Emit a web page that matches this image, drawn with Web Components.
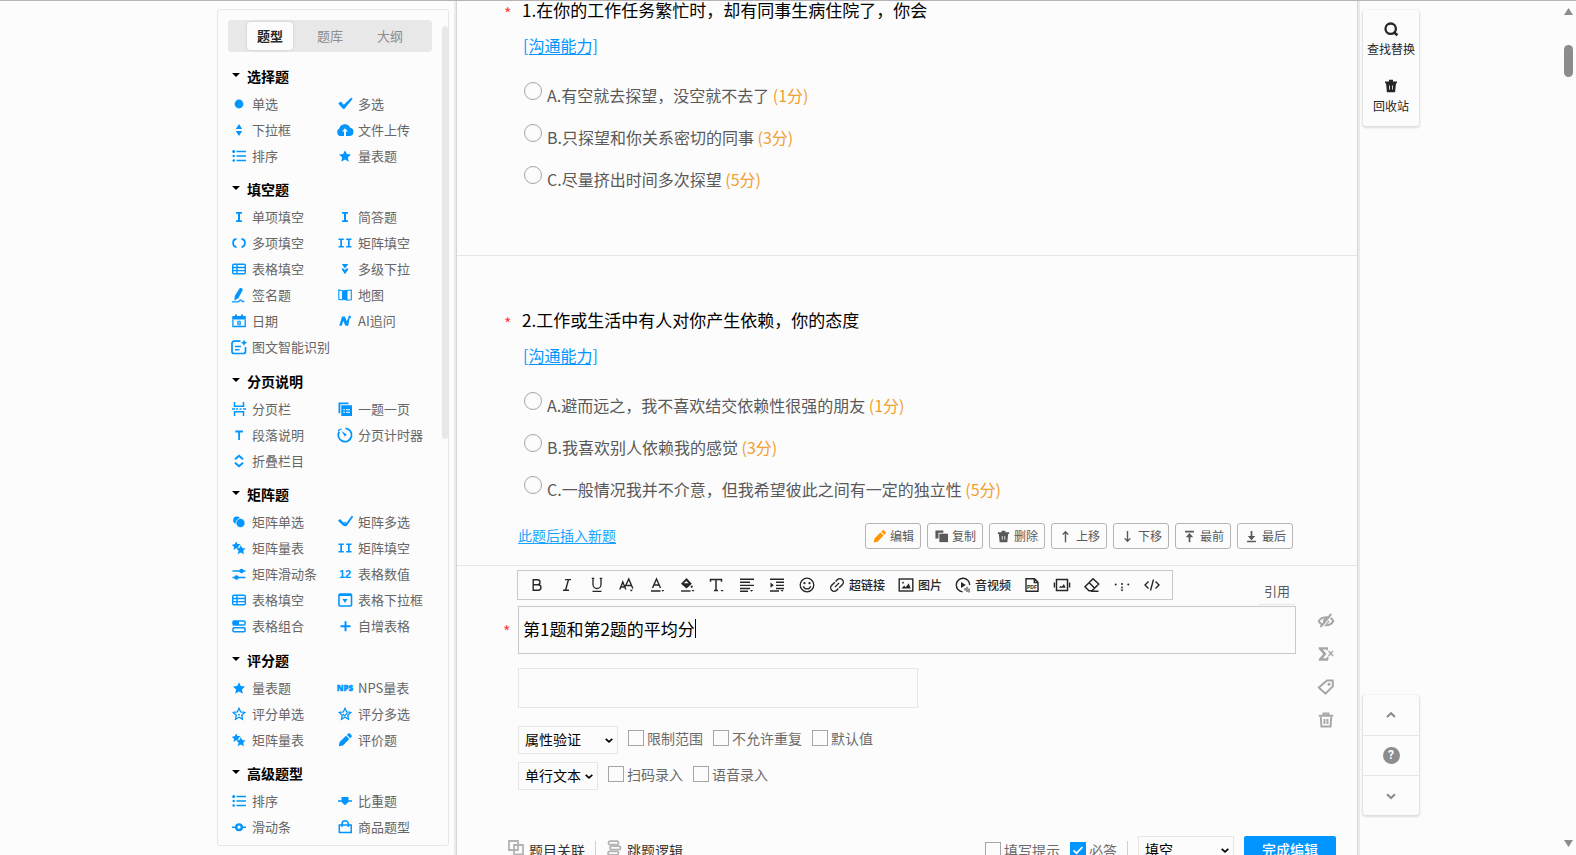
<!DOCTYPE html>
<html lang="zh-CN">
<head>
<meta charset="utf-8">
<title>问卷编辑</title>
<style>
  html, body { height: 100%; }
  body { margin: 0; background: #fcfcfc; color: #595959; font: 14px/20px "Noto Sans CJK SC", "Noto Sans", sans-serif; overflow: hidden; }
</style>
</head>
<body>
<survey-designer></survey-designer>
<script>
const ICONS = {
  dot: '<circle cx="8" cy="8" r="4.4"/>',
  check: '<path d="M1.200 7.600 3.800 5.500l3 3.300L14.200 1.700l1.500 1L7.300 12.900 5.800 12.700z"/>',
  updown: '<path d="M8 2l3.2 5H4.8zM8 14l3.2-5H4.8z"/>',
  cloud: '<path fill-rule="evenodd" d="M4.2 14A3.900 3.900 0 0 1 2.200 6.700 5.800 5.800 0 0 1 13.200 5.700a4.200 4.200 0 0 1-.8 8.300H9V9.500h2L8 6.200 5 9.500h2v4.500z"/>',
  list: '<circle cx="2.700" cy="3.500" r="1.500"/><circle cx="2.700" cy="8" r="1.200"/><circle cx="2.700" cy="12.500" r="1.300"/><path d="M5.500 3.500H15M5.500 8H15M5.500 12.500H15" stroke="currentColor" stroke-width="1.300"/>',
  star: '<path d="M8 2.200l1.800 3.900 4.200.5-3.100 2.900.8 4.200L8 11.600l-3.700 2.100.8-4.200L2 6.600l4.200-.5z"/>',
  ibeam: '<path d="M5 3h6v1.700H9v6.600h2V13H5v-1.700h2V4.700H5z"/>',
  brackets: '<path d="M5.500 4C1 4.300 1 11.700 5.500 12M10.500 4c4.500.3 4.500 7.700 0 8" fill="none" stroke="currentColor" stroke-width="1.800"/>',
  ibeam2: '<path d="M1.500 3.500h5.300v1.500H5v6h1.800v1.500H1.500V11h1.800V5H1.500zM9.200 3.500h5.300v1.500h-1.800v6h1.800v1.500H9.200V11H11V5H9.200z"/>',
  grid: '<path d="M3 3.200h10a1.300 1.300 0 0 1 1.300 1.300v7a1.300 1.300 0 0 1-1.300 1.300H3a1.300 1.300 0 0 1-1.300-1.300v-7A1.300 1.300 0 0 1 3 3.200zM2 6.500h12M2 9.600h12M6 3.500v9" fill="none" stroke="currentColor" stroke-width="1.400"/>',
  drop2: '<path d="M4.800 3h6.400L8 7.400zM4.800 7.500h1.900L8 9.200l1.300-1.700h1.900v1L8 13.200 4.800 8.500z"/>',
  sign: '<path d="M8.500 1.500c1.500-1 3.400 0 3.200 1.600L7.500 11 3.500 13.700 3.700 9z"/><path d="M1 14.800h5.500c1.500 0 2-2 3.200-2 1 0 .6 1.700 1.900 1.700h1.700" fill="none" stroke="currentColor" stroke-width="1.300"/>',
  map: '<path d="M5 3.500L10.500 2.800v10.700L5 12.800z"/><path d="M5.500 3.800L1.800 3v9.200l3.700.8M10 3.500l4.300-.5v9.700l-4.300.5" fill="none" stroke="currentColor" stroke-width="1.100"/>',
  date: '<path d="M2 3h2V1.500h2V3h4V1.500h2V3h2a.8.800 0 0 1 .8.800V6.500H1.200V3.800A.8.800 0 0 1 2 3z"/><path d="M1.900 6.500v7h12.300v-7" fill="none" stroke="currentColor" stroke-width="1.300"/><path d="M6.800 8.200h2.500v3.600H6.800zM6.800 10h2.500" fill="none" stroke="currentColor"/>',
  ai: '<path d="M5 3.500h2.800l2 4.800L11 5.200 13 3l-1.800 9.700H8.500L6.200 8 4.700 12.700H2.300z"/><circle cx="12.700" cy="4" r="1.300"/>',
  smart: '<path d="M9.500 2.200H3A2 2 0 0 0 1 4.200v8.300a2 2 0 0 0 2 2h9.500a2 2 0 0 0 2-2V8" fill="none" stroke="currentColor" stroke-width="1.700"/><path d="M4 7.500h6M4 10.800h4.500" stroke="currentColor" stroke-width="1.500"/><path d="M13 .5l1 2.200 2.200 1-2.200 1-1 2.200-1-2.200-2.200-1 2.200-1z"/>',
  pagebreak: '<path d="M3.500 1v4.200h9V1M3.500 15v-4.200h9V15" fill="none" stroke="currentColor" stroke-width="1.500"/><path d="M1 8h3M5 8h2M8.500 8h2M12 8h3" stroke="currentColor" stroke-width="1.500"/>',
  pages: '<path d="M1.500 1.500h10v1.800H3.300v9H1.500z"/><path fill-rule="evenodd" d="M4.300 4.300h10.700v10.700H4.300zm1.900 4v1h1.800v-1zm2.800 0v1h4v-1zm-2.800 2.500v1h1.800v-1zm2.800 0v1h4v-1z"/>',
  tee: '<path d="M4.300 3.500h7.600v2H9v7.500H7.200V5.500H4.300z"/>',
  timer: '<path d="M8.500 1.300A6.700 6.700 0 1 1 2.200 4.500" fill="none" stroke="currentColor" stroke-width="1.800"/><path d="M4.500 4l5.300 3.500-2 2z"/><path d="M1 3.800l3.500-2" stroke="currentColor" stroke-width="1.200"/>',
  fold: '<path d="M4 6.300L8 2.800l4 3.500M4 9.700l4 3.500 4-3.500" fill="none" stroke="currentColor" stroke-width="2"/>',
  dots2: '<circle cx="5.800" cy="6.200" r="3.600"/><circle cx="9.500" cy="9" r="4.500" stroke="#fcfcfc" stroke-width=".8"/>',
  check2: '<path d="M1 6.800l2-1.800 3.700 3.500L8 7.500l1.300 1.500L14.800 1.700l1.400 1L9.500 12.300 7 12l-1-.5z"/><path d="M3.500 4.500l5 5.500" stroke="#fcfcfc" stroke-width=".5"/>',
  stars: '<path d="M5.200 1.500l1.300 2.500 3 .1L7.300 6.500l.5 2.800-2.500-1.100L2.500 10l.5-3.300-2.300-2 3-.4z"/><path d="M9.700 4.800l1.700 3.100 3.500.4-2.500 2.500.8 3.700-3.400-1.700-3.200 1.700.7-3.700-2.400-2.500 3.400-.4z" stroke="#fcfcfc" stroke-width=".4"/>',
  sliders: '<path d="M1.500 5H14.500M1.500 11.500H14.500" stroke="currentColor" stroke-width="1.600"/><circle cx="10.500" cy="5" r="2.200"/><circle cx="5.500" cy="11.500" r="2.200"/>',
  num: '<text x="8" y="12" text-anchor="middle" font-family="Liberation Sans" font-weight="700" font-size="11">12</text>',
  dropbox: '<rect x="2" y="2" width="12.500" height="12" rx="1" fill="none" stroke="currentColor" stroke-width="1.600"/><path d="M2 2h12.500v2H2zM5.500 7h5L8 11z"/>',
  combo: '<rect x="2" y="3" width="12" height="4" rx="1" fill="none" stroke="currentColor" stroke-width="1.500"/><path d="M2 3h6v4H2z"/><rect x="2" y="9.800" width="12" height="4" rx="1" fill="none" stroke="currentColor" stroke-width="1.500"/>',
  plus: '<path d="M8.500 3.200v10M3.500 8.200h10" stroke="currentColor" stroke-width="2"/>',
  nps: '<text x="8" y="11" text-anchor="middle" font-family="Open Sans" font-weight="800" font-size="8" stroke="currentColor" stroke-width=".4">NPS</text>',
  starline: '<path d="M8 2.200l1.700 3.700 4 .5-3 2.800.8 4.100L8 11.300l-3.500 2 .8-4.100-3-2.800 4-.5z" fill="none" stroke="currentColor" stroke-width="1.300"/><circle cx="8" cy="8.700" r=".9"/>',
  starcheck: '<path d="M8 2.200l1.700 3.700 4 .5-3 2.800.8 4.100L8 11.300l-3.500 2 .8-4.100-3-2.800 4-.5z" fill="none" stroke="currentColor" stroke-width="1.300"/><path d="M6 8l1.700 1.800L10.300 7" fill="none" stroke="currentColor" stroke-width="1.200"/>',
  pencil: '<path d="M1.800 14.300l.8-4.300L9 3.700l3.300 3.300L6 13.500zM9.900 2.900l1.300-1.300a1.200 1.200 0 0 1 1.700 0l1.600 1.700a1.200 1.200 0 0 1 0 1.600L13.200 6.200z"/>',
  weight: '<path d="M1 8h14" stroke="currentColor" stroke-width="1.500"/><path d="M4.500 4h7v5L8 12.300 4.500 9z"/>',
  slide: '<path d="M1 8.200h14" stroke="currentColor" stroke-width="1.600"/><circle cx="8" cy="8.200" r="2.800" fill="#fcfcfc" stroke="currentColor" stroke-width="2.400"/>',
  bag: '<path d="M2.300 6h11.900v7.500H2.300zM5 8V5a3.200 3.200 0 0 1 6.400 0v3" fill="none" stroke="currentColor" stroke-width="1.500"/>',
  copy: '<path d="M1.500 1.500h8.500v2.500H4.800v6H1.500z"/><path d="M5.700 5H15v9H5.700z"/>',
  trash: '<path d="M2 3.500h4V1.800h4v1.700h4v1.800H2z"/><path fill-rule="evenodd" d="M3 5h10l-.9 9.200H3.900zM6.200 7.500v4h.8v-4zm2.800 0v4h.8v-4z"/>',
  up: '<path d="M8 14V3M5 6l3-3 3 3" fill="none" stroke="currentColor" stroke-width="1.500"/>',
  down: '<path d="M8 2v11M5 10l3 3 3-3" fill="none" stroke="currentColor" stroke-width="1.500"/>',
  first: '<path d="M3.300 2.800h9.400M8 14V6" fill="none" stroke="currentColor" stroke-width="1.800"/><path d="M8 4.300L12 8.800H4z"/>',
  last: '<path d="M3.300 13.300h9.400M8 2v8" fill="none" stroke="currentColor" stroke-width="1.800"/><path d="M8 12L12 7.500H4z"/>',
  bold: '<path d="M4.200 2.700h4.300a2.500 2.500 0 0 1 0 5H4.200zm0 5h5a2.700 2.700 0 0 1 0 5.500h-5z" fill="none" stroke="currentColor" stroke-width="1.400"/>',
  italic: '<path d="M6 2.600h6M4 13.300h6M9.500 2.600L6.500 13.300" fill="none" stroke="currentColor" stroke-width="1.400"/>',
  underline: '<path d="M4 1v6.500a4 4 0 0 0 8 0V1M3.500 14.300h9M2.800 1.300h2.500M10.700 1.300h2.500" fill="none" stroke="currentColor" stroke-width="1.300"/>',
  fontsize: '<path d="M.8 12.500L3.800 5l3 7.500M2 10h3.800M6.200 9.500L9.800 2l4 9.500M7.500 8.500h4.700" fill="none" stroke="currentColor" stroke-width="1.400"/><path d="M10.500 12.800h3.500l-1.700 1.700z"/>',
  fontcolor: '<path d="M3.500 11L7.500 2l4 9M5 8h5M2 14h9.500" fill="none" stroke="currentColor" stroke-width="1.400"/><path d="M12.300 13h3l-1.500 1.700z"/>',
  fill: '<path fill-rule="evenodd" d="M7.500 1l5.300 5.800L7.500 11.500 2 6.800zM7.200 4L4.800 6.200h5z"/><path d="M2 14h9.500" stroke="currentColor" stroke-width="1.400"/><circle cx="12.700" cy="9.700" r="1.100"/><path d="M12.500 13h3L14 14.700z"/>',
  text: '<path d="M1.500 4.800V2.600h11v2.200M7 2.600v11M5 13.500h4" fill="none" stroke="currentColor" stroke-width="1.500"/><path d="M11.500 13h3.200l-1.600 1.700z"/>',
  align: '<path d="M1 2.200h14M1 5.300h10M1 8.400h14M1 11.500h10M1 14.300h8" stroke="currentColor" stroke-width="1.400"/><path d="M11 13h3.200l-1.600 1.700z"/>',
  indent: '<path d="M1 2.200h14M7 5.300h8M7 8.400h8M7 11.500h8M1 14h9" stroke="currentColor" stroke-width="1.400"/><path d="M1.500 5.500l3.300 2.700-3.300 2.600zM11.500 13h3.200l-1.600 1.700z"/>',
  smile: '<circle cx="8" cy="8" r="6.800" fill="none" stroke="currentColor" stroke-width="1.300"/><circle cx="5.500" cy="6.200" r="1.100"/><circle cx="10.500" cy="6.200" r="1.100"/><path d="M4.300 9.300a3.900 3.900 0 0 0 7.400 0" fill="none" stroke="currentColor" stroke-width="1.300"/>',
  link: '<g transform="rotate(-45 8 8)" fill="none" stroke="currentColor" stroke-width="1.400"><path d="M6.500 11.500H4a3.500 3.500 0 0 1 0-7h4.500M9.500 4.500H12a3.500 3.500 0 0 1 0 7H7.500M5 8h6"/></g>',
  image: '<rect x="1.200" y="2" width="13.600" height="12" fill="none" stroke="currentColor" stroke-width="1.400"/><path d="M3.500 11.500l2.700-3 1.500 1.700 3-4 2 5.300z"/><circle cx="5" cy="5.700" r=".9"/>',
  media: '<path d="M7.500 14.700A6.700 6.700 0 1 1 14.700 8" fill="none" stroke="currentColor" stroke-width="1.400"/><path d="M6 5l4.800 3L6 11z"/><path d="M10 11v2.500M12 9.800V15M14 11.500V15.500" stroke="currentColor" stroke-width="1"/>',
  pdf: '<path d="M2 1.700h8.500L14 5.200v9.100H2zM10.300 2v3.500H14" fill="none" stroke="currentColor" stroke-width="1.400"/><text x="8" y="12" text-anchor="middle" font-family="Liberation Sans" font-weight="700" font-size="5">PDF</text>',
  carousel: '<rect x="2.500" y="2.500" width="11" height="11" fill="none" stroke="currentColor" stroke-width="1.500"/><path d="M.4 5.500v5M15.600 5.500v5" stroke="currentColor" stroke-width="1.400"/><path d="M4.700 10.700l2-2 1.200 1 2-2.700 1.700 3.700z"/>',
  eraser: '<path d="M9 1.700L14.700 7 8 13.800H5L1 9.800zM5.200 5.700l5.300 5.300M7 14.200h7.500" fill="none" stroke="currentColor" stroke-width="1.500"/>',
  more: '<circle cx="1.700" cy="7.500" r="1"/><circle cx="8" cy="7" r="1"/><circle cx="14.300" cy="7.500" r="1"/><circle cx="8" cy="10.500" r=".9"/><path d="M6.500 12.500h3L8 14.500z"/>',
  code: '<path d="M4.500 4.500L1 8l3.500 3.500M11.500 4.500L15 8l-3.500 3.500M9.500 2.500l-3 11" fill="none" stroke="currentColor" stroke-width="1.400"/>',
  hide: '<path d="M.8 8.200C3 3.500 12.500 2.500 15.300 8 12.500 13.700 3.500 13.500.8 8.200z" fill="none" stroke="currentColor" stroke-width="2"/><circle cx="8" cy="8" r="3"/><path d="M14.500 1.500L3.500 15" stroke="#fcfcfc" stroke-width="1.300"/><path d="M13.200 1L2.500 14.200" stroke="currentColor" stroke-width="2"/>',
  sigma: '<path d="M.7 1.300H10v3H8.300V3.600H4.800L8.500 8l-3.700 4.300H8.500l.8-1.500h1.400L10 14.800H.7v-1.500L5.200 8 .7 3z"/><path d="M10.500 5l4.700 5M15 5l-4.500 5" stroke="currentColor" stroke-width="1.300"/>',
  tag: '<path d="M9 1.500h5.700l.2 5.700L7.500 14.700.8 8.500z" fill="none" stroke="currentColor" stroke-width="2"/><circle cx="11" cy="5.200" r="1.500"/>',
  bin: '<path d="M.8 3.800h14.400M5.500 3.500v-2h5v2M2.800 5l.6 9.500h9.200L13.200 5M6.500 7v5M9.500 7v5" fill="none" stroke="currentColor" stroke-width="1.900"/>',
  relate: '<path d="M1 1h9v9H1zM6 5h9v9.500H6z" fill="none" stroke="currentColor" stroke-width="1.800"/>',
  jump: '<g fill="none" stroke="currentColor" stroke-width="1.700"><rect x="2.500" y="1.200" width="10" height="3.500" rx="1.700"/><rect x="4" y="6.200" width="10.500" height="3.500" rx="1.700"/><rect x="2" y="11.300" width="10.500" height="3.500" rx="1.700"/></g>',
  search: '<circle cx="7.700" cy="7.700" r="5.200" fill="none" stroke="currentColor" stroke-width="2.300"/><path d="M10.500 10.800l3.900 3.400" stroke="currentColor" stroke-width="2.500"/>',
  chevup: '<path d="M4 10l4-3.800L12 10" fill="none" stroke="currentColor" stroke-width="2"/>',
  chevdown: '<path d="M4 6.200L8 10l4-3.800" fill="none" stroke="currentColor" stroke-width="2"/>',
  caret: '<path d="M4.700 6.800L8 9.800l3.300-3" fill="none" stroke="currentColor" stroke-width="1.700"/>'
};

function define(name, html, extend) {
  const template = document.createElement('template');
  template.innerHTML = html;
  customElements.define(name, class extends HTMLElement {
    constructor() {
      super();
      this.attachShadow({ mode: 'open' }).append(template.content.cloneNode(true));
    }
    connectedCallback() { if (extend) extend(this, this.shadowRoot); }
  });
}

define('ui-icon', `<style>:host{display:block;flex:none;width:16px;height:16px}svg{display:block;width:100%;height:100%;overflow:visible}</style><svg viewBox="0 0 16 16" fill="currentColor" aria-hidden="true"></svg>`,
  (el, root) => { root.querySelector('svg').innerHTML = ICONS[el.getAttribute('name')] || ''; });

define('type-group', `<style>
  :host{display:block;padding-bottom:7px}
  :host(:nth-of-type(even)){padding-bottom:8px}
  h3{display:flex;align-items:center;gap:7px;box-sizing:border-box;margin:0 0 0 1px;height:28px;padding-bottom:2px;font-size:14px;font-weight:700;color:#000}
  h3::before{content:"";border:4px solid transparent;border-top-color:#000;border-bottom:0;margin-bottom:2px}
  div{display:grid;grid-template-columns:106px 1fr}
  button{display:flex;align-items:center;gap:5px;height:26px;border:0;padding:0;margin:0;background:none;font:inherit;font-size:13px;color:#666;white-space:nowrap}
  ui-icon{color:#0095ff}
</style><h3></h3><div></div>`, (el, root) => {
  root.querySelector('h3').textContent = el.getAttribute('heading');
  root.querySelector('div').innerHTML = el.getAttribute('items').split(' ').map(pair => {
    const [icon, label] = pair.split(':');
    return `<button type="button"><ui-icon name="${icon}"></ui-icon><span>${label}</span></button>`;
  }).join('');
});

define('type-sidebar', `<style>
  :host{display:flex;flex:none;box-sizing:border-box;width:232px;margin:8px 0 9px;border:1px solid #e6e6e6;border-radius:3px;overflow:hidden}
  .list{flex:1;min-width:0;padding:10px 10px 0;overflow:hidden}
  nav{display:flex;align-items:center;height:32px;padding:0 12px;border-radius:4px;background:#e8e8e8;margin-bottom:11px}
  nav button{flex:1;height:28px;border:0;padding:0;margin:0 7px;background:none;font:inherit;font-size:13px;color:#8c8c8c;border-radius:4px}
  nav button[aria-selected=true]{background:#fcfcfc;color:#262626;font-weight:700;box-shadow:0 0 2px 1px #d9d9d9}
  type-group{margin-left:3px}
  .bar{width:6px;height:413px;max-height:50%;margin-top:16px;border-radius:3px;background:#e8e8e8}
</style>
<div class="list">
  <nav role="tablist"><button role="tab" aria-selected="true">题型</button><button role="tab">题库</button><button role="tab">大纲</button></nav>
  <type-group heading="选择题" items="dot:单选 check:多选 updown:下拉框 cloud:文件上传 list:排序 star:量表题"></type-group>
  <type-group heading="填空题" items="ibeam:单项填空 ibeam:简答题 brackets:多项填空 ibeam2:矩阵填空 grid:表格填空 drop2:多级下拉 sign:签名题 map:地图 date:日期 ai:AI追问 smart:图文智能识别"></type-group>
  <type-group heading="分页说明" items="pagebreak:分页栏 pages:一题一页 tee:段落说明 timer:分页计时器 fold:折叠栏目"></type-group>
  <type-group heading="矩阵题" items="dots2:矩阵单选 check2:矩阵多选 stars:矩阵量表 ibeam2:矩阵填空 sliders:矩阵滑动条 num:表格数值 grid:表格填空 dropbox:表格下拉框 combo:表格组合 plus:自增表格"></type-group>
  <type-group heading="评分题" items="star:量表题 nps:NPS量表 starline:评分单选 starcheck:评分多选 stars:矩阵量表 pencil:评价题"></type-group>
  <type-group heading="高级题型" items="list:排序 weight:比重题 slide:滑动条 bag:商品题型"></type-group>
</div>
<div class="bar"></div>`);

define('answer-option', `<style>
  :host{display:block}
  label{display:flex;align-items:flex-start;gap:5px;padding:7px 0 9px;font-size:16px;line-height:26px;color:#595959}
  input{appearance:none;flex:none;width:18px;height:18px;margin:0 0 0 1px;border:1px solid #a6a6a6;border-radius:50%}
  ::slotted(b){font-weight:400;color:#f0a030}
</style><label><input type="radio"><span><slot></slot></span></label>`);

define('survey-question', `<style>
  :host{display:block;border-bottom:1px solid #e6e6e6;padding:55px 64px 54px 47px}
  :host([scrolled]){padding-top:0}
  :host([active]){padding-bottom:16px}
  header{display:flex}
  i{flex:none;width:18px;font:16px/24px "Noto Sans CJK SC",sans-serif;height:18px;color:#ff4040}
  h2{margin:0;font-size:17px;line-height:18px;font-weight:400;color:#000}
  .body{padding-left:19px}
  a{color:#0095ff;text-underline-offset:2px}
  .tag{display:block;width:max-content;margin:14px 0 18px;font-size:16px;line-height:24px}
</style>
<header><i>*</i><h2><slot name="title"></slot></h2></header>
<div class="body"><a class="tag" href="#">[沟通能力]</a><slot></slot></div>
<slot name="actions"></slot>`);

define('action-button', `<style>
  :host{display:block}
  button{display:flex;align-items:center;justify-content:center;gap:3px;box-sizing:border-box;width:56px;height:26px;padding:0;border:1px solid #b5b5b5;border-radius:3px;background:none;color:#595959;font:inherit;font-size:12px;white-space:nowrap}
  ui-icon{width:15px;height:15px}
  ui-icon[name=pencil]{color:#ff9500}
</style><button type="button"><ui-icon></ui-icon><slot></slot></button>`, (el, root) => root.querySelector('ui-icon').replaceWith(Object.assign(document.createElement('template'), { innerHTML: `<ui-icon name="${el.getAttribute('icon')}"></ui-icon>` }).content));

define('question-actions', `<style>
  :host{display:flex;align-items:center;gap:6px;margin:12px 0 0 14px}
  a{margin-right:auto;padding-bottom:2px;font-size:14px;color:#1aa3ff;text-underline-offset:2px}
</style>
<a href="#">此题后插入新题</a>
<action-button icon="pencil">编辑</action-button><action-button icon="copy">复制</action-button><action-button icon="trash">删除</action-button><action-button icon="up">上移</action-button><action-button icon="down">下移</action-button><action-button icon="first">最前</action-button><action-button icon="last">最后</action-button>`);

define('format-toolbar', `<style>
  :host{display:flex;box-sizing:border-box;height:30px;padding:0 5px 0 4px;border:1px solid #c9c9c9}
  button{display:flex;align-items:center;gap:4px;border:0;margin:0;padding:0 7px;background:none;color:#262626;font:inherit;font-size:12px;font-weight:500;white-space:nowrap}
  button:has(span){padding-right:6px}
</style>`, (el, root) => {
  const tools = 'bold italic underline fontsize fontcolor fill text align indent smile link:超链接 image:图片 media:音视频 pdf carousel eraser more code';
  root.innerHTML += tools.split(' ').map(t => {
    const [icon, label] = t.split(':');
    return `<button type="button" aria-label="${label || icon}"><ui-icon name="${icon}"></ui-icon>${label ? `<span>${label}</span>` : ''}</button>`;
  }).join('');
});

define('check-field', `<style>
  :host{display:block}
  label{display:flex;align-items:center;gap:3px;height:24px;font-size:14px;color:#6b6b6b;white-space:nowrap}
  span{display:grid;position:relative}
  input{appearance:none;box-sizing:border-box;width:16px;height:16px;margin:0;border:1px solid #a6a6a6}
  input:checked{background:#0095ff;border-color:#0095ff}
  svg{position:absolute;inset:0;display:none;pointer-events:none}
  input:checked + svg{display:block}
</style><label><span><input type="checkbox"><svg width="16" height="16" viewBox="0 0 16 16"><path d="M3.500 8.300l3 2.900L12.500 5" fill="none" stroke="#fff" stroke-width="1.700"/></svg></span><slot></slot></label>`,
  (el, root) => { root.querySelector('input').checked = el.hasAttribute('checked'); });

define('select-field', `<style>
  :host{display:block;position:relative;height:28px}
  select{appearance:none;box-sizing:border-box;width:100%;height:28px;padding:0 6px 2px;margin:0;border:1px solid #e6e6e6;border-radius:0;background:none;color:#000;font:inherit;font-size:14px}
  ui-icon{position:absolute;right:1px;top:6px;color:#000;pointer-events:none}
</style><select><option></option></select><ui-icon name="caret"></ui-icon>`, (el, root) => {
  root.querySelector('option').textContent = el.getAttribute('value');
  root.querySelector('select').setAttribute('aria-label', el.getAttribute('label'));
});

define('question-editor', `<style>
  :host{display:block;padding-top:4px}
  .body{display:grid;grid-template-columns:15px minmax(0,1fr) 61px;padding-left:46px}
  .top{display:flex;justify-content:space-between;height:36px;padding:0 62px 0 60px}
  .quote{align-self:flex-end;box-sizing:border-box;width:36px;height:25px;margin:0 0 1px;padding:0 0 2px;border:0;border-bottom:1px solid #e6e6e6;background:none;font:inherit;font-size:13px;color:#595959}
  i{font:16px/50px "Noto Sans CJK SC",sans-serif;color:#ff4040}
  .title{display:flex;align-items:center;box-sizing:border-box;height:48px;padding:0 4px 3px;border:1px solid #c9c9c9}
  .title input{field-sizing:content;min-width:0;border:0;padding:0;margin:0;outline:0;background:none;font:inherit;font-size:17px;line-height:24px;color:#000}
  .title span{width:1px;height:19px;background:#000}
  .answer{display:block;box-sizing:border-box;width:400px;max-width:100%;height:40px;margin:14px 0 18px;border:1px solid #e6e6e6;background:none}
  .row{display:flex;gap:10px;margin-bottom:8px}
  .row select-field{width:100px}
  .row select-field.short{width:80px}
  aside{display:flex;flex-direction:column;align-items:center;gap:17px;padding:7px 2px 0 0}
  aside button{border:0;padding:0;margin:0;background:none;color:#a6a6a6}
  footer{display:flex;align-items:center;gap:10px;margin-top:38px;padding:0 21px 0 51px}
  .tool{display:flex;align-items:center;gap:5px;border:0;padding:0;margin:0;background:none;font:inherit;font-size:14px;color:#333;white-space:nowrap}
  .tool ui-icon{color:#b3b3b3;margin-bottom:4px}
  hr{width:1px;height:18px;margin:0;border:0;background:#d0d0d0}
  .push{margin-left:auto}
  footer select-field{width:96px}
  .done{width:92px;height:28px;border:0;padding:0 0 2px;border-radius:2px;background:#0095ff;color:#fff;font:inherit;font-size:14px;font-weight:500}
</style>
<div class="top"><format-toolbar></format-toolbar><button class="quote" type="button">引用</button></div>
<div class="body">
  <i>*</i>
  <div>
    <div class="title"><input aria-label="题目标题" value="第1题和第2题的平均分"><span></span></div>
    <input class="answer" aria-label="答案">
    <div class="row"><select-field value="属性验证" label="属性验证"></select-field><check-field>限制范围</check-field><check-field>不允许重复</check-field><check-field>默认值</check-field></div>
    <div class="row"><select-field class="short" value="单行文本" label="文本类型"></select-field><check-field>扫码录入</check-field><check-field>语音录入</check-field></div>
  </div>
  <aside><button aria-label="隐藏"><ui-icon name="hide"></ui-icon></button><button aria-label="公式"><ui-icon name="sigma"></ui-icon></button><button aria-label="标签"><ui-icon name="tag"></ui-icon></button><button aria-label="删除"><ui-icon name="bin"></ui-icon></button></aside>
</div>
<footer>
  <button class="tool" type="button"><ui-icon name="relate"></ui-icon>题目关联</button><hr><button class="tool" type="button"><ui-icon name="jump"></ui-icon>跳题逻辑</button>
  <check-field class="push">填写提示</check-field><check-field checked>必答</check-field><hr><select-field value="填空" label="题型"></select-field><button class="done" type="button">完成编辑</button>
</footer>`);

define('float-panels', `<style>
  :host{display:flex;flex-direction:column;justify-content:space-between;flex:none;width:56px;margin:9px 0 40px 3px}
  section{display:flex;flex-direction:column;border-radius:3px;box-shadow:0 1px 2px 1px #dedede}
  button{display:flex;flex-direction:column;align-items:center;justify-content:center;border:0;padding:0;margin:0;background:none;color:#262626;font:12px/18px "Noto Sans CJK SC",sans-serif;white-space:nowrap}
  .tools{padding:1px 0}
  .tools button{height:57px;gap:3px}
  .nav button{height:40px;color:#8c8c8c;border-top:1px solid #e6e6e6}
  .nav button:first-child{border:0}
  b{width:17px;height:17px;border-radius:50%;background:#8c8c8c;color:#fcfcfc;font:700 12px/17px Roboto,sans-serif;text-align:center}
</style>
<section class="tools"><button type="button"><ui-icon name="search"></ui-icon>查找替换</button><button type="button"><ui-icon name="trash"></ui-icon>回收站</button></section>
<section class="nav"><button type="button" aria-label="上一题"><ui-icon name="chevup"></ui-icon></button><button type="button" aria-label="帮助"><b>?</b></button><button type="button" aria-label="下一题"><ui-icon name="chevdown"></ui-icon></button></section>`);

define('page-scrollbar', `<style>
  :host{position:fixed;right:3px;top:8px;bottom:8px;width:9px;display:flex;flex-direction:column;align-items:stretch}
  .up{height:7px;background:#8c8c8c;clip-path:polygon(50% 0,100% 100%,0 100%)}
  .thumb{height:32px;margin:30px 0 auto;border-radius:5px;background:#8c8c8c}
  .down{height:7px;background:#8c8c8c;clip-path:polygon(0 0,100% 0,50% 100%)}
</style><div class="up"></div><div class="thumb"></div><div class="down"></div>`);

define('survey-designer', `<style>
  :host{display:flex;justify-content:center;box-sizing:border-box;height:100vh;padding:0 157px 0 217px;border-top:1px solid #b5b3b5;overflow:hidden}
  main{flex:1;min-width:0;margin:0 2px 0 7px;border:solid #d6d6d6;border-width:0 1px;box-shadow:0 0 0 2px #ebebeb;overflow:hidden}
</style>
<type-sidebar></type-sidebar>
<main>
  <survey-question scrolled><span slot="title">1.在你的工作任务繁忙时，却有同事生病住院了，你会</span>
    <answer-option>A.有空就去探望，没空就不去了 <b>(1分)</b></answer-option>
    <answer-option>B.只探望和你关系密切的同事 <b>(3分)</b></answer-option>
    <answer-option>C.尽量挤出时间多次探望 <b>(5分)</b></answer-option>
  </survey-question>
  <survey-question active><span slot="title">2.工作或生活中有人对你产生依赖，你的态度</span>
    <answer-option>A.避而远之，我不喜欢结交依赖性很强的朋友 <b>(1分)</b></answer-option>
    <answer-option>B.我喜欢别人依赖我的感觉 <b>(3分)</b></answer-option>
    <answer-option>C.一般情况我并不介意，但我希望彼此之间有一定的独立性 <b>(5分)</b></answer-option>
    <question-actions slot="actions"></question-actions>
  </survey-question>
  <question-editor></question-editor>
</main>
<float-panels></float-panels>
<page-scrollbar></page-scrollbar>`);
</script>
</body>
</html>
